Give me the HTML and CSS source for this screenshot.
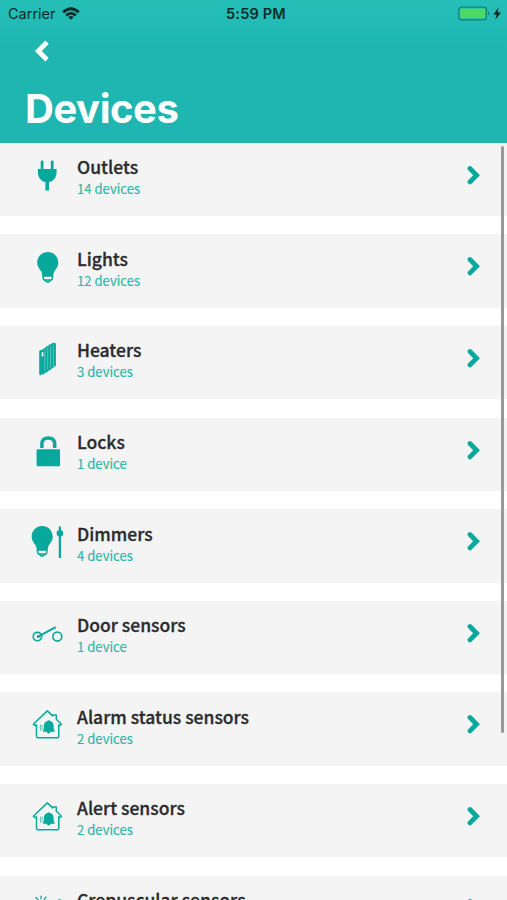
FILE: index.html
```html
<!DOCTYPE html>
<html lang="en">
<head>
<meta charset="utf-8">
<title>Devices</title>
<link rel="stylesheet" href="styles.css">
</head>
<body>
<svg class="defs" aria-hidden="true">
  <symbol id="next" viewBox="0 0 14 20"><path d="M3 3.500 9.600 10.200 3 16.900" fill="none" stroke="currentColor" stroke-width="4.800" stroke-linecap="round" stroke-linejoin="miter"/></symbol>
  <symbol id="bulb" viewBox="0 0 22 34"><path fill="currentColor" d="M11 1.900A10.600 10.600 0 0 0 .4 12.500c0 4.100 2.600 6.600 4.200 9.200.9 1.600.8 4.500 1.200 7.300.2 1.200 1.200 1.600 2.100 1.900 1 .9 1.700 2 3.100 2s2.100-1.100 3.100-2c.9-.3 1.900-.7 2.100-1.900.4-2.800.3-5.700 1.200-7.300 1.600-2.600 4.200-5.100 4.200-9.200A10.600 10.600 0 0 0 11 1.900Z"/><path fill="#f4f4f4" d="M7.200 26.800h7.600v1.500q0 1-1 1H8.200q-1 0-1-1ZM9.700 30.800h2.600l-1.300.8Z"/></symbol>
  <symbol id="house" viewBox="0 0 34 34"><g fill="none" stroke="currentColor" stroke-width="1.500" stroke-linejoin="round" stroke-linecap="round"><path d="M3.300 16.200 17.300 2.900l5.300 5v-.8h3.700v4.200l5.200 4.900-1.600 1.400-1.100-.8v11.400q0 1.600-1.600 1.600H8.100q-1.600 0-1.600-1.600V16.800l-1.400.9Z"/><path stroke-width="1" opacity=".7" d="M12.300 17.500q-1 2 0 4M10.700 16.800q-1.400 2.800 0 5.600"/></g><path fill="currentColor" d="M18.700 12.300q1 0 1.200.8c3 .6 3.700 2.700 3.700 5.200 0 2.400.4 4 1.200 4.900v.6H20.600q-.2 1.800-1.900 1.800t-1.900-1.800H12.900v-.6c.8-.9 1-2.500 1-4.900 0-2.500.7-4.600 3.600-5.200q.2-.8 1.200-.8Z"/></symbol>
</svg>
<div class="screen">
  <header class="header">
    <div class="status">
      <div class="carrier"><span>Carrier</span>
        <svg class="wifi" viewBox="0 0 18 13"><g fill="none" stroke="#092b2a" stroke-width="2.700"><path d="M1.200 5.200Q9-1.700 16.800 5.200"/><path d="M4.100 8.400q4.900-4 9.800 0"/></g><path fill="#092b2a" d="M6.200 10q2.800-2 5.600 0L9 12.700Z"/></svg>
      </div>
      <time class="clock">5:59 PM</time>
      <svg class="battery" viewBox="0 0 45 16"><rect x="1.800" y="1.200" width="27.600" height="12.600" rx="2.600" fill="none" stroke="#168481" stroke-width="1.300"/><rect x="3.300" y="2.800" width="24.600" height="9.400" rx="1" fill="#4cd964"/><path d="M31 5.500q1.500.6 1.500 2T31 9.500Z" fill="#168481"/><path d="M41.500 1.600 36.500 8.500h3.200l-1.400 5.200 5.700-7.300h-3.500Z" fill="#06201f"/></svg>
    </div>
    <svg class="back" viewBox="0 0 18 26"><path d="M14 4.300 5.300 13l8.700 8.700" fill="none" stroke="#fff" stroke-width="4.800"/></svg>
    <h1 class="title">Devices</h1>
  </header>
  <main class="list">
    <div class="row">
      <svg class="icon" viewBox="0 0 34 34"><path fill="currentColor" d="M10.700 2.300q0-.9 1.400-.9t1.400.9V10h7.300V2.300q0-.9 1.400-.9t1.400.9V10h3v3.200c0 5.200-3.200 9-7.600 9.900v8.300h-3.600v-8.300C11 22.200 7.900 18.400 7.900 13.200V10h2.800Z"/></svg>
      <div class="label"><div class="name">Outlets</div><div class="count">14 devices</div></div>
      <svg class="next"><use href="#next"/></svg>
    </div>
    <div class="row">
      <svg class="icon" viewBox="0 0 34 34"><use href="#bulb" x="6.800" width="22" height="34"/></svg>
      <div class="label"><div class="name">Lights</div><div class="count">12 devices</div></div>
      <svg class="next"><use href="#next"/></svg>
    </div>
    <div class="row">
      <svg class="icon" viewBox="0 0 34 34"><path fill="currentColor" d="m9.200 9 1.300-1.100 2.500-.5v-1l2.300-.5.7-1.400 2.300-.5.700-1.400 2.300-.4.700-1.200 2.400-.2 1.500.7v22.400l-1.700.7-1 1.400-2 .7-1 1.500-2 .6-1 1.400-2 .6-1.200 1.400-2.700.2-.7 1-1.400-.9Z"/><path fill="none" stroke="#f4f4f4" stroke-width=".5" opacity=".7" d="M14.800 7v22.200M17.700 5.500v22M20.500 4v22M23.300 2.700v22"/><path d="M12.500 10.200v4.200" stroke="#f4f4f4" stroke-width="1.700"/></svg>
      <div class="label"><div class="name">Heaters</div><div class="count">3 devices</div></div>
      <svg class="next"><use href="#next"/></svg>
    </div>
    <div class="row">
      <svg class="icon" viewBox="0 0 34 34"><rect x="6.600" y="15.200" width="23.400" height="17" rx="1.200" fill="currentColor"/><path d="M11.900 14V10.200q0-6.100 6.400-6.100t6.400 6.100V14" fill="none" stroke="currentColor" stroke-width="3.500"/></svg>
      <div class="label"><div class="name">Locks</div><div class="count">1 device</div></div>
      <svg class="next"><use href="#next"/></svg>
    </div>
    <div class="row">
      <svg class="icon" viewBox="0 0 34 34"><use href="#bulb" x="1.200" y="-1" width="22" height="34"/><path d="M29.900 1.500v31.500" stroke="currentColor" stroke-width="2.300"/><circle cx="29.900" cy="8.200" r="3.300" fill="currentColor"/></svg>
      <div class="label"><div class="name">Dimmers</div><div class="count">4 devices</div></div>
      <svg class="next"><use href="#next"/></svg>
    </div>
    <div class="row">
      <svg class="icon" viewBox="0 0 34 34"><g fill="none" stroke="currentColor" stroke-width="1.600"><circle cx="7.400" cy="19.600" r="4.200"/><circle cx="27.300" cy="19.600" r="4.500"/><path stroke-width="1.900" d="m8.500 19.400 17.200-9.200"/></g><circle cx="8.300" cy="19.500" r="1.600" fill="currentColor"/></svg>
      <div class="label"><div class="name">Door sensors</div><div class="count">1 device</div></div>
      <svg class="next"><use href="#next"/></svg>
    </div>
    <div class="row">
      <svg class="icon" viewBox="0 0 34 34"><use href="#house"/></svg>
      <div class="label"><div class="name">Alarm status sensors</div><div class="count">2 devices</div></div>
      <svg class="next"><use href="#next"/></svg>
    </div>
    <div class="row">
      <svg class="icon" viewBox="0 0 34 34"><use href="#house"/></svg>
      <div class="label"><div class="name">Alert sensors</div><div class="count">2 devices</div></div>
      <svg class="next"><use href="#next"/></svg>
    </div>
    <div class="row">
      <svg class="icon" viewBox="0 0 34 34"><g fill="none" stroke="currentColor" stroke-width="1.300"><path d="m5.500 5.300 3 2.700M11 3.700v3.500M16.200 4.700l-2.300 3.200M28.200 8l3 .2"/><circle cx="11.200" cy="14" r="4"/><path d="M20 22a8 8 0 1 0 9-14"/></g></svg>
      <div class="label"><div class="name">Crepuscular sensors</div></div>
      <svg class="next"><use href="#next"/></svg>
    </div>
  </main>
  <div class="scrollbar"></div>
</div>
</body>
</html>
```

FILE: styles.css
```css
* { box-sizing: border-box; }
body { margin: 0; background: #fff; overflow: hidden; }
.defs { position: absolute; width: 0; height: 0; }
.screen { position: relative; width: 507px; height: 900px; overflow: hidden; }
.header { height: 142.7px; background: linear-gradient(#25bfb8 0, #1fb6b1 50px, #1fb6b1 100%); }
.status {
  display: grid; grid-template-columns: 1fr auto 1fr; align-items: center;
  height: 27px; padding: 0 5px 0 8px; color: #092b2a;
  font: 14.500px/27px Inter, sans-serif;
}
.carrier { display: flex; align-items: center; gap: 6px; }
.wifi { width: 18px; height: 13px; margin-top: -1px; }
.clock { font-weight: 600; letter-spacing: .2px; padding-left: 2px; }
.battery { width: 45px; height: 16px; justify-self: end; }
.back { display: block; width: 18px; height: 26px; margin: 11px 0 0 33px; }
.title { margin: 20px 0 0 25px; color: #fff; font: 700 40px/50px Inter, sans-serif; letter-spacing: -.45px; }
.list { display: flex; flex-direction: column; gap: 18.300px; }
.row {
  display: flex; flex: none; align-items: flex-start; height: 73.330px;
  padding: 16px 26px 0 30px; background: #f4f4f4; color: #08a99c;
}
.icon { flex: none; width: 34px; height: 34px; }
.label { flex: 1; margin: -4.700px 0 0 13px; white-space: nowrap; font-family: "Noto Sans CJK SC", "Noto Sans", sans-serif; }
.name { color: #2b2b2d; font-size: 17.500px; font-weight: 500; line-height: 25px; -webkit-text-stroke: .3px #2b2b2d; }
.count { margin-top: 1px; color: #2ab7a6; font-size: 13.100px; line-height: 18px; -webkit-text-stroke: .15px #2ab7a6; }
.next { flex: none; width: 14px; height: 20px; margin-top: 6px; }
.scrollbar { position: absolute; top: 146px; right: 3px; width: 3.500px; height: 587px; border-radius: 2px; background: #999; }
```
